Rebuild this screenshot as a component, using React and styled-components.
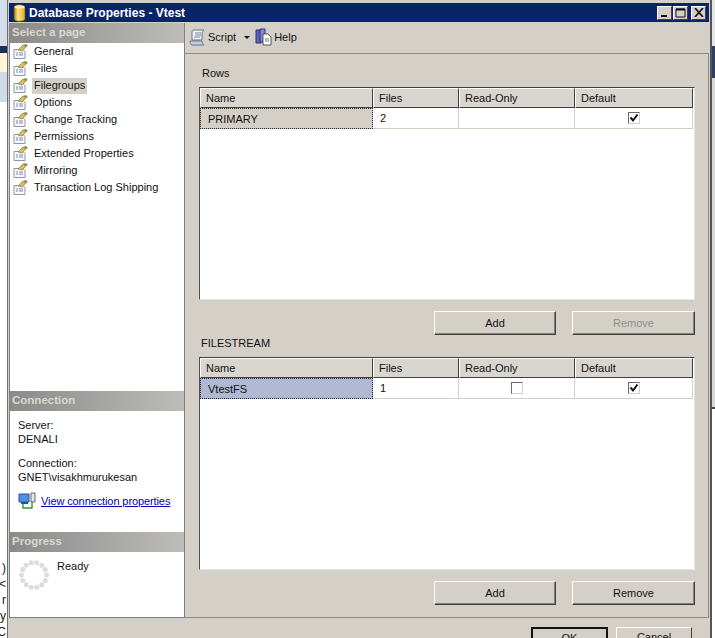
import React from 'react';
import styled, { createGlobalStyle } from 'styled-components';

const GlobalStyle = createGlobalStyle`
  html, body {
    margin: 0;
    padding: 0;
    background: #fff;
  }
  body {
    font-family: "Liberation Sans", Arial, sans-serif;
    font-size: 11px;
    color: #111;
  }
`;

const Page = styled.div`
  display: flex;
  width: 715px;
  height: 638px;
  overflow: hidden;
`;

const BackLeft = styled.div`
  width: 7px;
  flex: none;
  display: flex;
  flex-direction: column;
  overflow: hidden;
`;

const BackBand = styled.div`
  height: ${(p) => p.$h}px;
  background: ${(p) => p.$bg};
  flex: none;
`;

const BackLetters = styled.div`
  display: flex;
  flex-direction: column;
  align-items: flex-end;
  padding-right: 1px;
  line-height: 16px;
  font-size: 12px;
  color: #222;
`;

const BackRight = styled.div`
  width: 3px;
  flex: none;
  display: flex;
  flex-direction: column;
`;

const Window = styled.div`
  width: 705px;
  flex: none;
  height: 660px;
  box-sizing: border-box;
  border-left: 1px solid #6f6f6f;
  border-right: 2px solid #555;
  padding: 3px 1px 0 1px;
  background: #d4d0c8;
  display: flex;
  flex-direction: column;
`;

const TitleBar = styled.div`
  height: 19px;
  flex: none;
  background: #0a246a;
  display: flex;
  align-items: center;
  padding: 0 3px 0 4px;
`;

const TitleText = styled.div`
  margin-left: 3px;
  color: #fff;
  font-weight: bold;
  font-size: 12px;
  flex: 1;
`;

const CaptionButton = styled.div`
  width: 15px;
  height: 14px;
  margin-left: ${(p) => p.$gap || 1}px;
  box-sizing: border-box;
  background: #d4d0c8;
  border: 1px solid;
  border-color: #fff #404040 #404040 #fff;
  display: flex;
  align-items: center;
  justify-content: center;
`;

const Body = styled.div`
  flex: none;
  height: 595px;
  margin-top: 1px;
  display: flex;
`;

const Sidebar = styled.div`
  width: 176px;
  flex: none;
  box-sizing: border-box;
  background: #fff;
  border: 1px solid #808080;
  border-top: none;
  display: flex;
  flex-direction: column;
`;

const SectionHeader = styled.div`
  height: 20px;
  flex: none;
  background: linear-gradient(90deg, #8b8a88, #bdbcb9);
  color: #d9d7d1;
  font-weight: bold;
  font-size: 11.5px;
  line-height: 19px;
  padding-left: 2px;
`;

const PageList = styled.div`
  height: 348px;
  flex: none;
`;

const PageRow = styled.div`
  height: 17px;
  display: flex;
  align-items: center;
  padding-left: 3px;
`;

const PageLabel = styled.span`
  margin-left: 3px;
  padding: 0 2px;
  height: 16px;
  line-height: 14px;
  background: ${(p) => (p.$active ? '#d4d0c8' : 'transparent')};
`;

const ConnectionBlock = styled.div`
  height: 121px;
  flex: none;
  box-sizing: border-box;
  padding: 7px 0 0 8px;
  line-height: 14px;
`;

const InfoLine = styled.div`
  margin-top: ${(p) => p.$gap || 0}px;
`;

const LinkRow = styled.div`
  display: flex;
  align-items: center;
  gap: 5px;
  margin-top: 8px;
`;

const PropsLink = styled.a`
  color: #0000c0;
  text-decoration: underline;
  letter-spacing: -0.1px;
`;

const ProgressBlock = styled.div`
  display: flex;
  padding: 7px 0 0 8px;
`;

const ReadyText = styled.div`
  margin-left: 7px;
  line-height: 15px;
`;

const Main = styled.div`
  flex: 1;
  display: flex;
  flex-direction: column;
  min-width: 0;
`;

const Toolbar = styled.div`
  height: 28px;
  flex: none;
  display: flex;
  align-items: center;
  padding: 0 0 2px 4px;
  border-bottom: 1px solid #8a8a86;
`;

const ToolItem = styled.div`
  display: flex;
  align-items: center;
  gap: 2px;
  margin-right: ${(p) => p.$mr || 0}px;
`;

const Caret = styled.span`
  width: 0;
  height: 0;
  margin-left: 6px;
  border-left: 3px solid transparent;
  border-right: 3px solid transparent;
  border-top: 3px solid #111;
`;

const Panel = styled.div`
  height: 564px;
  flex: none;
  box-sizing: border-box;
  border-right: 1px solid #8a8a86;
  border-bottom: 1px solid #8a8a86;
  padding-left: 14px;
`;

const GroupLabel = styled.div`
  height: ${(p) => p.$h}px;
  padding: ${(p) => p.$top}px 0 0 ${(p) => p.$left}px;
  box-sizing: border-box;
  line-height: 14px;
`;

const Grid = styled.div`
  width: 496px;
  height: 213px;
  box-sizing: border-box;
  background: #fff;
  border: 1px solid;
  border-color: #404040 #e8e6e1 #e8e6e1 #505050;
`;

const GridRow = styled.div`
  display: grid;
  grid-template-columns: 173px 86px 116px 118px;
`;

const HeadCell = styled.div`
  height: 20px;
  box-sizing: border-box;
  background: #d9d5cf;
  border: 1px solid;
  border-color: #fff #404040 #404040 #fff;
  padding-left: 5px;
  line-height: 18px;
`;

const DataCell = styled.div`
  height: 21px;
  box-sizing: border-box;
  border-right: 1px solid #d4d0c8;
  border-bottom: 1px solid #d4d0c8;
  display: flex;
  align-items: center;
  justify-content: ${(p) => (p.$center ? 'center' : 'flex-start')};
  padding-left: ${(p) => (p.$center ? 0 : 7)}px;
`;

const NameCell = styled(DataCell)`
  background: ${(p) => p.$bg};
  border: 1px dotted #222;
`;

const Check = styled.div`
  width: 12px;
  height: 12px;
  box-sizing: border-box;
  background: #fff;
  border: 1px solid;
  border-color: #6a6a6a #d4d0c8 #d4d0c8 #6a6a6a;
  display: flex;
  align-items: center;
  justify-content: center;
`;

const ButtonRow = styled.div`
  width: 496px;
  display: flex;
  justify-content: flex-end;
  gap: 16px;
  margin-top: 11px;
`;

const PushButton = styled.div`
  width: ${(p) => p.$w}px;
  height: 24px;
  box-sizing: border-box;
  background: #d4d0c8;
  border: 1px solid;
  border-color: #fff #404040 #404040 #fff;
  box-shadow: inset -1px -1px 0 #808080;
  text-align: center;
  line-height: 22px;
  color: ${(p) => (p.$disabled ? '#8f8d88' : '#111')};
`;

const Footer = styled.div`
  display: flex;
  justify-content: flex-end;
  gap: 8px;
  padding: 9px 17px 0 0;
`;

const FooterButton = styled.div`
  width: ${(p) => (p.$primary ? 77 : 76)}px;
  height: 23px;
  box-sizing: border-box;
  background: #d4d0c8;
  border: ${(p) => (p.$primary ? '2px solid #111' : '1px solid')};
  border-color: ${(p) => (p.$primary ? '#111' : '#fff #404040 #404040 #fff')};
  text-align: center;
  line-height: 19px;
`;

const DbIcon = () => (
  <svg width="13" height="18" viewBox="0 0 13 18">
    <defs>
      <linearGradient id="db" x1="0" x2="1" y1="0" y2="0">
        <stop offset="0" stopColor="#b07c10" />
        <stop offset="0.35" stopColor="#ffe58a" />
        <stop offset="1" stopColor="#e0a820" />
      </linearGradient>
    </defs>
    <path d="M1 3c0-3 11-3 11 0v12c0 3-11 3-11 0z" fill="url(#db)" stroke="#6e5208" strokeWidth="0.6" />
    <ellipse cx="6.5" cy="3" rx="5" ry="1.6" fill="#fff0b0" />
  </svg>
);

const PageIcon = () => (
  <svg width="16" height="15" viewBox="0 0 16 15">
    <path d="M1 5.5h9l2 2v7H1z" fill="#f8f9fc" stroke="#8b97aa" />
    <path d="M3 9h2M6 9h4M3 11h2M6 11h4" stroke="#7a89b8" />
    <path d="M5 6l5-5 3 2-4 4z" fill="#dcbc58" stroke="#7a6628" strokeWidth="0.6" />
    <path d="M10 1l3 2 2-1-2-2z" fill="#7d9448" />
  </svg>
);

const ScriptIcon = () => (
  <svg width="17" height="17" viewBox="0 0 17 17">
    <path d="M4 1h11c-1 1-2 2-2 4v6H3V5c0-2 0-3 1-4z" fill="#eef1f6" stroke="#66748c" />
    <path d="M1 12h12c0 2 1 3 2 4H3c-1 0-2-2-2-4z" fill="#c6cfdd" stroke="#66748c" />
    <path d="M6 4h6M6 6h6M5 8h6" stroke="#7d8ca0" />
  </svg>
);

const HelpIcon = () => (
  <svg width="17" height="18" viewBox="0 0 17 18">
    <path d="M1 2h5v13H1z" fill="#5a62b4" stroke="#2e3478" />
    <path d="M5 1h5v13H5z" fill="#8088cc" stroke="#2e3478" />
    <path d="M8 6h5l3 3v8H8z" fill="#fff" stroke="#555" />
    <path d="M10 11h4M10 13h4" stroke="#777" />
  </svg>
);

const LinkIcon = () => (
  <svg width="18" height="18" viewBox="0 0 18 18">
    <path d="M1 2h10v8H1z" fill="#4f8fe8" stroke="#2c4f9c" />
    <path d="M13 1h4v9h-4z" fill="#dfe4ee" stroke="#666" />
    <path d="M3 11h7" stroke="#2c4f9c" strokeWidth="2" />
    <path d="M5 12v4h9v-6" fill="none" stroke="#2f9a2f" strokeWidth="1.4" />
  </svg>
);

const Spinner = () => (
  <svg width="32" height="32" viewBox="0 0 32 32">
    {Array.from({ length: 14 }).map((_, i) => {
      const a = (i / 14) * Math.PI * 2;
      return (
        <circle
          key={i}
          cx={16 + Math.cos(a) * 12.5}
          cy={16 + Math.sin(a) * 12.5}
          r="2.5"
          fill="#dcdcdc"
        />
      );
    })}
  </svg>
);

const CheckMark = () => (
  <svg width="10" height="10" viewBox="0 0 10 10">
    <path d="M1.5 4.5l2.5 3 4.5-6" fill="none" stroke="#111" strokeWidth="2" />
  </svg>
);

const pages = [
  'General',
  'Files',
  'Filegroups',
  'Options',
  'Change Tracking',
  'Permissions',
  'Extended Properties',
  'Mirroring',
  'Transaction Log Shipping',
];

const columns = ['Name', 'Files', 'Read-Only', 'Default'];

const FileGrid = ({ name, files, nameBg, readOnlyBox }) => (
  <Grid>
    <GridRow>
      {columns.map((c) => (
        <HeadCell key={c}>{c}</HeadCell>
      ))}
    </GridRow>
    <GridRow>
      <NameCell $bg={nameBg}>{name}</NameCell>
      <DataCell>{files}</DataCell>
      <DataCell $center>{readOnlyBox && <Check />}</DataCell>
      <DataCell $center>
        <Check>
          <CheckMark />
        </Check>
      </DataCell>
    </GridRow>
  </Grid>
);

export default function App() {
  return (
    <Page>
      <GlobalStyle />
      <BackLeft>
        <BackBand $h={46} $bg="#d5dfe9" />
        <BackBand $h={7} $bg="#1b2f5e" />
        <BackBand $h={19} $bg="#fff6d8" />
        <BackBand $h={30} $bg="#cfdbe9" />
        <BackBand $h={458} $bg="#fff" />
        <BackLetters>
          <span>)</span>
          <span>&lt;</span>
          <span>r</span>
          <span>y</span>
          <span>C</span>
        </BackLetters>
      </BackLeft>
      <Window>
        <TitleBar>
          <DbIcon />
          <TitleText>Database Properties - Vtest</TitleText>
          <CaptionButton>
            <svg width="9" height="9" viewBox="0 0 9 9">
              <path d="M1 7h6v2H1z" fill="#111" />
            </svg>
          </CaptionButton>
          <CaptionButton>
            <svg width="11" height="10" viewBox="0 0 11 10">
              <path d="M1 1h9v8H1z" fill="none" stroke="#111" />
              <path d="M1 1.5h9" stroke="#111" strokeWidth="2" />
            </svg>
          </CaptionButton>
          <CaptionButton $gap={3}>
            <svg width="10" height="9" viewBox="0 0 10 9">
              <path d="M1 0l8 9M9 0L1 9" stroke="#111" strokeWidth="1.7" />
            </svg>
          </CaptionButton>
        </TitleBar>
        <Body>
          <Sidebar>
            <SectionHeader>Select a page</SectionHeader>
            <PageList>
              {pages.map((p) => (
                <PageRow key={p}>
                  <PageIcon />
                  <PageLabel $active={p === 'Filegroups'}>{p}</PageLabel>
                </PageRow>
              ))}
            </PageList>
            <SectionHeader>Connection</SectionHeader>
            <ConnectionBlock>
              <InfoLine>Server:</InfoLine>
              <InfoLine>DENALI</InfoLine>
              <InfoLine $gap={10}>Connection:</InfoLine>
              <InfoLine>GNET\visakhmurukesan</InfoLine>
              <LinkRow>
                <LinkIcon />
                <PropsLink>View connection properties</PropsLink>
              </LinkRow>
            </ConnectionBlock>
            <SectionHeader>Progress</SectionHeader>
            <ProgressBlock>
              <Spinner />
              <ReadyText>Ready</ReadyText>
            </ProgressBlock>
          </Sidebar>
          <Main>
            <Toolbar>
              <ToolItem $mr={5}>
                <ScriptIcon />
                Script
                <Caret />
              </ToolItem>
              <ToolItem>
                <HelpIcon />
                Help
              </ToolItem>
            </Toolbar>
            <Panel>
              <GroupLabel $h={33} $top={12} $left={3}>Rows</GroupLabel>
              <FileGrid name="PRIMARY" files="2" nameBg="#d4d0c8" />
              <ButtonRow>
                <PushButton $w={122}>Add</PushButton>
                <PushButton $w={123} $disabled>Remove</PushButton>
              </ButtonRow>
              <GroupLabel $h={22} $top={1} $left={2}>FILESTREAM</GroupLabel>
              <FileGrid name="VtestFS" files="1" nameBg="#b0b8d4" readOnlyBox />
              <ButtonRow>
                <PushButton $w={122}>Add</PushButton>
                <PushButton $w={123}>Remove</PushButton>
              </ButtonRow>
            </Panel>
            <Footer>
              <FooterButton $primary>OK</FooterButton>
              <FooterButton>Cancel</FooterButton>
            </Footer>
          </Main>
        </Body>
      </Window>
      <BackRight>
        <BackBand $h={46} $bg="#e4e6ea" />
        <BackBand $h={32} $bg="#2b3f68" />
        <BackBand $h={329} $bg="#dad8d2" />
        <BackBand $h={2} $bg="#444" />
        <BackBand $h={229} $bg="#fff" />
      </BackRight>
    </Page>
  );
}
